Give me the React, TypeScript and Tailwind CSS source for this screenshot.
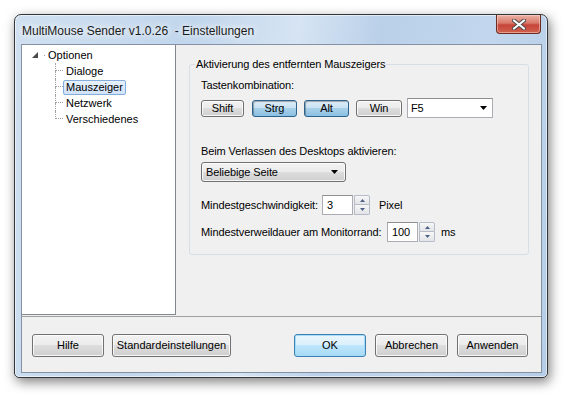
import type { ReactNode } from "react";

// ─── Win7 style primitives ───────────────────────────────────────────────────
type BtnKind = "normal" | "pressed" | "default";

const BTN_LOOK: Record<BtnKind, string> = {
  normal:
    "border-[#707070] bg-[linear-gradient(#f2f2f2_0%,#ebebeb_50%,#dddddd_50%,#cfcfcf_100%)] shadow-[inset_0_0_0_1px_rgba(255,255,255,0.8)]",
  pressed:
    "border-[#2c628b] bg-[linear-gradient(#e0eef8_0%,#c6e0f1_50%,#a9d0ea_50%,#8cc0e2_100%)] shadow-[inset_1px_1px_1px_rgba(0,0,0,0.3)]",
  default:
    "border-[#3c7fb1] bg-[linear-gradient(#eaf6fd_0%,#d9f0fc_50%,#bee6fd_50%,#a7d9f5_100%)] shadow-[inset_0_0_0_1px_rgba(160,220,250,0.9)]",
};

function WinButton({
  children,
  className = "",
  kind = "normal",
}: {
  children: ReactNode;
  className?: string;
  kind?: BtnKind;
}) {
  return (
    <button
      className={`flex shrink-0 items-center justify-center rounded-[3px] border text-[11px] leading-none text-black ${BTN_LOOK[kind]} ${className}`}
    >
      {children}
    </button>
  );
}

function DownArrow() {
  return (
    <svg width="7" height="4" viewBox="0 0 7 4">
      <polygon points="0,0 7,0 3.5,4" fill="#000" />
    </svg>
  );
}

function SpinBox({ value, width }: { value: string; width: string }) {
  return (
    <div className="flex h-[20px] shrink-0">
      <div
        className={`flex h-full items-center border border-[#abadb3] border-t-[#8e8f8f] bg-white pl-[4px] text-[11px] ${width}`}
      >
        {value}
      </div>
      <div className="ml-[1px] flex h-full w-[16px] flex-col">
        <div className="flex h-1/2 items-center justify-center rounded-tr-[2px] border border-[#b5bcc7] bg-[linear-gradient(#f7f7f7,#e2e4e8)]">
          <svg width="5" height="3" viewBox="0 0 5 3">
            <polygon points="0,3 5,3 2.5,0" fill="#4d6185" />
          </svg>
        </div>
        <div className="flex h-1/2 items-center justify-center rounded-br-[2px] border border-t-0 border-[#b5bcc7] bg-[linear-gradient(#f7f7f7,#e2e4e8)]">
          <svg width="5" height="3" viewBox="0 0 5 3">
            <polygon points="0,0 5,0 2.5,3" fill="#4d6185" />
          </svg>
        </div>
      </div>
    </div>
  );
}

// ─── Tree ────────────────────────────────────────────────────────────────────
const CHILDREN = ["Dialoge", "Mauszeiger", "Netzwerk", "Verschiedenes"];

function Tree() {
  return (
    <div className="h-[270px] w-[154px] shrink-0 border-r border-b border-[#828790] bg-white pt-[2px] text-[11px]">
      <div className="flex h-[16px] items-center pl-[10px]">
        <svg width="6" height="6" viewBox="0 0 6 6">
          <polygon points="6,0 6,6 0,6" fill="#4a4a4a" />
        </svg>
        <span className="ml-[6px] h-px w-px bg-[#a0a0a0]" />
        <span className="ml-[3px]">Optionen</span>
      </div>
      {CHILDREN.map((label, i) => (
        <div key={label} className="flex h-[16px] items-stretch pl-[33px]">
          <div className="flex w-[8px] flex-col">
            <div className="h-[8px] border-b border-l border-dotted border-[#a0a0a0]" />
            {i < CHILDREN.length - 1 && (
              <div className="h-[8px] border-l border-dotted border-[#a0a0a0]" />
            )}
          </div>
          <div className="flex items-center">
            <span
              className={
                label === "Mauszeiger"
                  ? "flex h-[15px] items-center rounded-[2px] border border-[#84acdd] bg-[linear-gradient(#e8f1fc,#cfe2f9)] px-[2px]"
                  : "flex h-[15px] items-center border border-transparent px-[2px]"
              }
            >
              {label}
            </span>
          </div>
        </div>
      ))}
    </div>
  );
}

// ─── Settings page ───────────────────────────────────────────────────────────
function MousePage() {
  return (
    <div className="flex-1 pt-[12px] pl-[13px] text-[11px] leading-[14px] tracking-[-0.1px]">
      <fieldset className="w-[340px] rounded-[3px] border border-[#d5dfe5] pb-[12px]">
        <legend className="ml-[5px] px-[1px] leading-[14px]">
          Aktivierung des entfernten Mauszeigers
        </legend>
        <div className="pl-[11px]">
          <div className="mt-[7px]">Tastenkombination:</div>
          <div className="mt-[6px] flex h-[20px] items-center">
            <WinButton className="h-[17px] w-[43px]">Shift</WinButton>
            <WinButton kind="pressed" className="ml-[8px] h-[17px] w-[45px]">
              Strg
            </WinButton>
            <WinButton kind="pressed" className="ml-[7px] h-[17px] w-[45px]">
              Alt
            </WinButton>
            <WinButton className="ml-[7px] h-[17px] w-[46px]">Win</WinButton>
            <div className="ml-[5px] flex h-[20px] w-[86px] items-center justify-between border border-[#abadb3] border-t-[#8e8f8f] bg-white pr-[5px] pl-[3px]">
              <span>F5</span>
              <DownArrow />
            </div>
          </div>

          <div className="mt-[26px]">Beim Verlassen des Desktops aktivieren:</div>
          <button
            className={`mt-[4px] flex h-[20px] w-[145px] items-center justify-between rounded-[3px] border pr-[7px] pl-[4px] text-[11px] ${BTN_LOOK.normal}`}
          >
            <span>Beliebige Seite</span>
            <DownArrow />
          </button>

          <div className="mt-[13px] flex h-[20px] items-center">
            <span className="w-[121px] shrink-0">Mindestgeschwindigkeit:</span>
            <SpinBox value="3" width="w-[31px]" />
            <span className="ml-[9px]">Pixel</span>
          </div>
          <div className="mt-[7px] flex h-[20px] items-center">
            <span className="w-[186px] shrink-0">Mindestverweildauer am Monitorrand:</span>
            <SpinBox value="100" width="w-[31px]" />
            <span className="ml-[6px]">ms</span>
          </div>
        </div>
      </fieldset>
    </div>
  );
}

// ─── Main ────────────────────────────────────────────────────────────────────
export default function App() {
  return (
    <div className="h-[397px] w-[566px] overflow-hidden bg-white pt-[14px] pl-[14px] font-['Liberation_Sans',Arial,sans-serif] text-black">
      <div className="flex h-[364px] w-[534px] flex-col rounded-t-[7px] rounded-b-[5px] border border-[#33363b] bg-[linear-gradient(100deg,#d0e0f1_0%,#c1d6ec_30%,#d6e4f3_48%,#bad0e9_62%,#c2d7ed_80%,#b6cde7_100%)] shadow-[2px_4px_12px_rgba(0,0,0,0.5),inset_0_0_0_1px_rgba(255,255,255,0.55)]">
        {/* Title bar */}
        <div className="flex h-[29px] shrink-0 items-start justify-between">
          <span className="mt-[9px] ml-[7px] whitespace-pre text-[12px] leading-[14px] text-[#1b1b1b] [text-shadow:0_0_6px_#fff,0_0_10px_#fff]">
            {"MultiMouse Sender v1.0.26  - Einstellungen"}
          </span>
          <button className="mr-[6px] flex h-[19px] w-[45px] items-center justify-center rounded-b-[4px] border border-t-0 border-[#6b2a22] bg-[linear-gradient(#eab3a6_0%,#d9786a_45%,#c7453a_55%,#d0624f_100%)] shadow-[inset_0_0_0_1px_rgba(255,220,210,0.5)]">
            <svg width="14" height="11" viewBox="0 0 14 11">
              <path d="M2 1.5 L12 9.5 M12 1.5 L2 9.5" stroke="#4a4a4a" strokeWidth="4" strokeLinecap="round" />
              <path d="M2 1.5 L12 9.5 M12 1.5 L2 9.5" stroke="#fff" strokeWidth="2.2" strokeLinecap="round" />
            </svg>
          </button>
        </div>

        {/* Client area */}
        <div className="mr-[5px] ml-[6px] flex h-[329px] flex-col border border-[#8391a2] bg-[#f0f0f0]">
          <div className="flex h-[271px] shrink-0">
            <Tree />
            <MousePage />
          </div>
          <div className="flex flex-1 items-start border-t border-[#a0a0a0] pt-[17px] pl-[10px] text-[11px]">
            <WinButton className="h-[23px] w-[72px]">Hilfe</WinButton>
            <WinButton className="ml-[8px] h-[23px] w-[119px]">Standardeinstellungen</WinButton>
            <WinButton kind="default" className="ml-[63px] h-[23px] w-[72px]">
              OK
            </WinButton>
            <WinButton className="ml-[9px] h-[23px] w-[73px]">Abbrechen</WinButton>
            <WinButton className="ml-[9px] h-[23px] w-[71px]">Anwenden</WinButton>
          </div>
        </div>
      </div>
    </div>
  );
}
